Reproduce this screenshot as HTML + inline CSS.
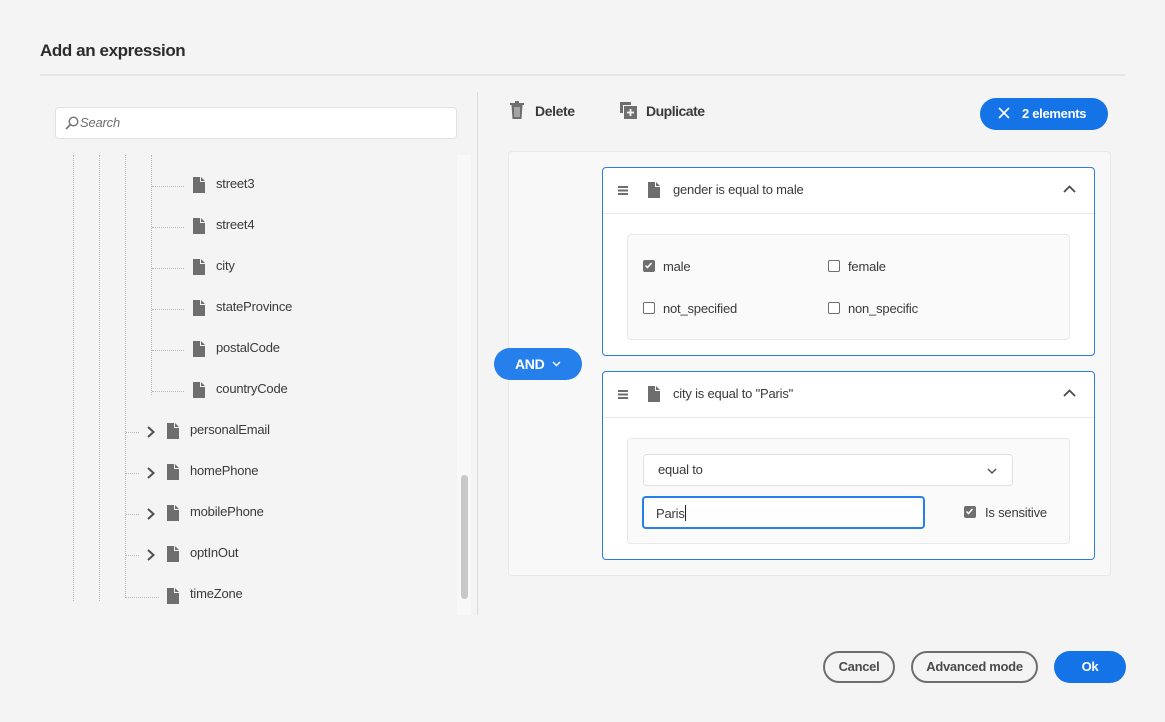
<!DOCTYPE html>
<html><head><meta charset="utf-8"><style>
*{box-sizing:border-box;margin:0;padding:0}
body{width:1165px;height:722px;background:#f4f4f4;font-family:"Liberation Sans",sans-serif;color:#3a3a3a;position:relative;overflow:hidden;font-size:13px}
.a{position:absolute}
.t{position:absolute;font-size:13px;color:#3a3a3a;line-height:16px;white-space:nowrap;letter-spacing:-0.2px}
.vl{position:absolute;width:0;border-left:1px dotted #b8b8b8}
.hl{position:absolute;height:0;border-top:1px dotted #b8b8b8}
.fi{position:absolute;width:12px;height:16px}
.chev{position:absolute;width:10px;height:14px}
.cb{position:absolute;width:12px;height:12px;border:1.5px solid #6e6e6e;border-radius:2px;background:#fff}
.btn{position:absolute;height:32px;border-radius:16px;font-weight:bold;font-size:13px;line-height:28px;text-align:center;letter-spacing:-0.3px}
</style></head><body>
<div class="t" style="left:40px;top:41px;font-size:17px;font-weight:bold;color:#2c2c2c;line-height:20px;letter-spacing:-0.4px">Add an expression</div>
<div class="a" style="left:40px;top:74px;width:1085px;height:2px;background:#e6e6e6"></div>

<div class="a" style="left:55px;top:107px;width:402px;height:32px;background:#fff;border:1px solid #e1e1e1;border-radius:4px"></div>
<svg class="a" style="left:65px;top:116px" width="14" height="14" viewBox="0 0 14 14"><circle cx="8.5" cy="5.5" r="4.3" fill="none" stroke="#707070" stroke-width="1.4"/><path d="M5.5 8.5L1 13" stroke="#707070" stroke-width="1.6"/></svg>
<div class="t" style="left:80px;top:115px;color:#707070;font-style:italic;font-size:13px">Search</div>

<div class="vl" style="left:73px;top:155px;height:446px"></div>
<div class="vl" style="left:99px;top:155px;height:446px"></div>
<div class="vl" style="left:125px;top:155px;height:443px"></div>
<div class="vl" style="left:151px;top:155px;height:240px"></div>
<div class="hl" style="left:152px;top:186px;width:32px"></div>
<div class="hl" style="left:152px;top:227px;width:32px"></div>
<div class="hl" style="left:152px;top:268px;width:32px"></div>
<div class="hl" style="left:152px;top:309px;width:32px"></div>
<div class="hl" style="left:152px;top:350px;width:32px"></div>
<div class="hl" style="left:152px;top:391px;width:32px"></div>
<svg width="0" height="0" style="position:absolute"><defs><symbol id="f" viewBox="0 0 12 16"><path d="M0 0H7V5H12V16H0Z" fill="#6e6e6e"/><path d="M8 0L12 4H8Z" fill="#6e6e6e"/></symbol><symbol id="c" viewBox="0 0 10 14"><path d="M2 2L7.5 7L2 12" fill="none" stroke="#505050" stroke-width="2"/></symbol></defs></svg>
<svg class="fi" style="left:193px;top:177px"><use href="#f"/></svg><div class="t" style="left:216px;top:176px">street3</div>
<svg class="fi" style="left:193px;top:218px"><use href="#f"/></svg><div class="t" style="left:216px;top:217px">street4</div>
<svg class="fi" style="left:193px;top:259px"><use href="#f"/></svg><div class="t" style="left:216px;top:258px">city</div>
<svg class="fi" style="left:193px;top:300px"><use href="#f"/></svg><div class="t" style="left:216px;top:299px">stateProvince</div>
<svg class="fi" style="left:193px;top:341px"><use href="#f"/></svg><div class="t" style="left:216px;top:340px">postalCode</div>
<svg class="fi" style="left:193px;top:382px"><use href="#f"/></svg><div class="t" style="left:216px;top:381px">countryCode</div>
<div class="hl" style="left:126px;top:432px;width:13px"></div>
<div class="hl" style="left:126px;top:473px;width:13px"></div>
<div class="hl" style="left:126px;top:514px;width:13px"></div>
<div class="hl" style="left:126px;top:555px;width:13px"></div>
<div class="hl" style="left:126px;top:597px;width:33px"></div>
<svg class="chev" style="left:146px;top:425px"><use href="#c"/></svg>
<svg class="chev" style="left:146px;top:466px"><use href="#c"/></svg>
<svg class="chev" style="left:146px;top:507px"><use href="#c"/></svg>
<svg class="chev" style="left:146px;top:548px"><use href="#c"/></svg>
<svg class="fi" style="left:167px;top:423px"><use href="#f"/></svg><div class="t" style="left:190px;top:422px">personalEmail</div>
<svg class="fi" style="left:167px;top:464px"><use href="#f"/></svg><div class="t" style="left:190px;top:463px">homePhone</div>
<svg class="fi" style="left:167px;top:505px"><use href="#f"/></svg><div class="t" style="left:190px;top:504px">mobilePhone</div>
<svg class="fi" style="left:167px;top:546px"><use href="#f"/></svg><div class="t" style="left:190px;top:545px">optInOut</div>
<svg class="fi" style="left:167px;top:588px"><use href="#f"/></svg><div class="t" style="left:190px;top:586px">timeZone</div>
<div class="a" style="left:457px;top:155px;width:14px;height:460px;background:#f8f8f8"></div>
<div class="a" style="left:461px;top:475px;width:7px;height:124px;background:#c8c8c8;border-radius:4px"></div>
<div class="a" style="left:477px;top:92px;width:1px;height:523px;background:#dcdcdc"></div>

<svg class="a" style="left:509px;top:101px" width="16" height="18" viewBox="0 0 16 18"><path d="M1 3H15" stroke="#6e6e6e" stroke-width="2"/><path d="M6 1H10" stroke="#6e6e6e" stroke-width="2"/><path d="M2.5 4H13.5L12.5 18H3.5Z" fill="#6e6e6e"/><path d="M6 6V16M8 6V16M10 6V16" stroke="#f4f4f4" stroke-width="0.8"/></svg>
<div class="t" style="left:535px;top:103px;font-weight:bold;font-size:14px;letter-spacing:-0.4px">Delete</div>
<svg class="a" style="left:620px;top:102px" width="17" height="17" viewBox="0 0 17 17"><path d="M0 0H11V3H3V11H0Z" fill="#6e6e6e"/><rect x="4" y="4" width="13" height="13" fill="#6e6e6e"/><path d="M10.5 7V14M7 10.5H14" stroke="#f4f4f4" stroke-width="1.8"/></svg>
<div class="t" style="left:646px;top:103px;font-weight:bold;font-size:14px;letter-spacing:-0.5px">Duplicate</div>
<div class="btn" style="left:980px;top:98px;width:128px;background:#1473e6;color:#fff;line-height:32px"><span style="position:absolute;left:18px;top:0"><svg width="12" height="12" viewBox="0 0 12 12" style="vertical-align:-1px"><path d="M1 1L11 11M11 1L1 11" stroke="#fff" stroke-width="1.6"/></svg></span><span style="position:absolute;left:42px">2 elements</span></div>

<div class="a" style="left:508px;top:151px;width:603px;height:425px;background:#f8f8f8;border:1px solid #e8e8e8;border-radius:4px"></div>
<div class="btn" style="left:494px;top:348px;width:88px;background:#2680eb;color:#fff;line-height:32px;font-size:14px">AND <svg width="9" height="6" viewBox="0 0 9 6" style="margin-left:4px;vertical-align:2px"><path d="M1 1L4.5 4.5L8 1" fill="none" stroke="#fff" stroke-width="1.4"/></svg></div>

<div class="a" style="left:602px;top:167px;width:493px;height:189px;background:#fff;border:1px solid #2d7ae0;border-radius:4px"></div>
<div class="a" style="left:603px;top:213px;width:491px;height:1px;background:#e8e8e8"></div>
<div class="a" style="left:618px;top:186px;width:10px;height:1.5px;background:#6e6e6e;box-shadow:0 3.5px 0 #6e6e6e,0 7px 0 #6e6e6e"></div>
<svg class="fi" style="left:648px;top:182px"><use href="#f"/></svg>
<div class="t" style="left:673px;top:182px">gender is equal to male</div>
<svg class="a" style="left:1063px;top:185px" width="13" height="8" viewBox="0 0 13 8"><path d="M1 7L6.5 1.5L12 7" fill="none" stroke="#4b4b4b" stroke-width="1.8"/></svg>
<div class="a" style="left:627px;top:234px;width:443px;height:106px;background:#fafafa;border:1px solid #e8e8e8;border-radius:4px"></div>
<div class="cb" style="left:643px;top:260px;background:#6e6e6e;border-color:#6e6e6e"><svg width="9" height="9" viewBox="0 0 9 9" style="position:absolute;left:0;top:0"><path d="M1.5 4.5L3.5 6.5L7.5 2" fill="none" stroke="#fff" stroke-width="1.5"/></svg></div>
<div class="t" style="left:663px;top:259px">male</div>
<div class="cb" style="left:828px;top:260px"></div><div class="t" style="left:848px;top:259px">female</div>
<div class="cb" style="left:643px;top:302px"></div><div class="t" style="left:663px;top:301px">not_specified</div>
<div class="cb" style="left:828px;top:302px"></div><div class="t" style="left:848px;top:301px">non_specific</div>

<div class="a" style="left:602px;top:371px;width:493px;height:189px;background:#fff;border:1px solid #2d7ae0;border-radius:4px"></div>
<div class="a" style="left:603px;top:417px;width:491px;height:1px;background:#e8e8e8"></div>
<div class="a" style="left:618px;top:390px;width:10px;height:1.5px;background:#6e6e6e;box-shadow:0 3.5px 0 #6e6e6e,0 7px 0 #6e6e6e"></div>
<svg class="fi" style="left:648px;top:386px"><use href="#f"/></svg>
<div class="t" style="left:673px;top:386px">city is equal to "Paris"</div>
<svg class="a" style="left:1063px;top:389px" width="13" height="8" viewBox="0 0 13 8"><path d="M1 7L6.5 1.5L12 7" fill="none" stroke="#4b4b4b" stroke-width="1.8"/></svg>
<div class="a" style="left:627px;top:438px;width:443px;height:106px;background:#fafafa;border:1px solid #e8e8e8;border-radius:4px"></div>
<div class="a" style="left:643px;top:454px;width:370px;height:32px;background:#fff;border:1px solid #e1e1e1;border-radius:4px"></div>
<div class="t" style="left:658px;top:462px">equal to</div>
<svg class="a" style="left:987px;top:468px" width="10" height="6" viewBox="0 0 10 6"><path d="M1 1L5 5L9 1" fill="none" stroke="#505050" stroke-width="1.4"/></svg>
<div class="a" style="left:642px;top:496px;width:283px;height:33px;background:#fff;border:2px solid #2680eb;border-radius:4px"></div>
<div class="t" style="left:656px;top:505px">Paris<span style="display:inline-block;width:1px;height:16px;background:#222;vertical-align:-3px"></span></div>
<div class="cb" style="left:964px;top:506px;background:#6e6e6e;border-color:#6e6e6e"><svg width="9" height="9" viewBox="0 0 9 9" style="position:absolute;left:0;top:0"><path d="M1.5 4.5L3.5 6.5L7.5 2" fill="none" stroke="#fff" stroke-width="1.5"/></svg></div>
<div class="t" style="left:985px;top:505px">Is sensitive</div>

<div class="btn" style="left:823px;top:651px;width:72px;border:2px solid #6e6e6e;color:#4b4b4b">Cancel</div>
<div class="btn" style="left:911px;top:651px;width:127px;border:2px solid #6e6e6e;color:#4b4b4b">Advanced mode</div>
<div class="btn" style="left:1054px;top:651px;width:72px;background:#1473e6;color:#fff;line-height:32px">Ok</div>
</body></html>
